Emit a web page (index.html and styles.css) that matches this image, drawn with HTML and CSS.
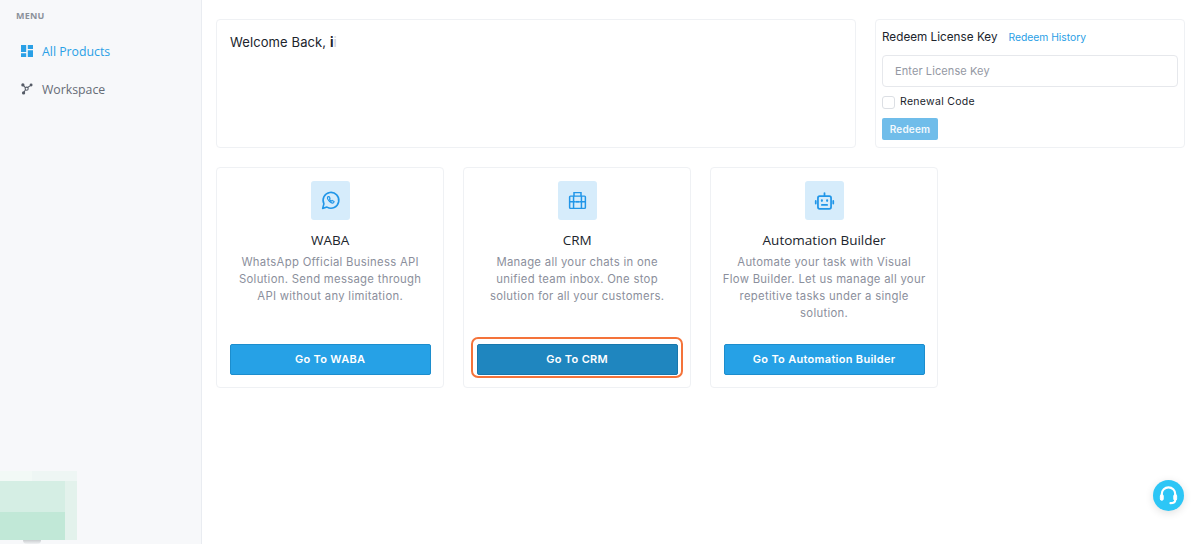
FILE: index.html
```html
<!DOCTYPE html>
<html lang="en">
<head>
<meta charset="utf-8">
<title>All Products</title>
<link rel="stylesheet" href="styles.css">
</head>
<body>
<div class="app">
  <aside class="sidebar">
    <div class="menu-label">MENU</div>
    <nav class="nav">
      <a class="nav-item active">
        <svg class="nav-icon" viewBox="0 0 12 12"><path fill="#2aa0e6" d="M0 0h5.200v7H0zM6.800 0H12v4H6.800zM6.800 5.200H12V12H6.800zM0 8.200h5.200V12H0z"/></svg>
        <span>All Products</span>
      </a>
      <a class="nav-item">
        <svg class="nav-icon" viewBox="0 0 14 14" fill="none"><path stroke="#555b66" stroke-width="1.200" d="M2.200 2.200 6 6.400 11.800 2.400M6 6.400 3 11.600"/><circle cx="2.200" cy="2.200" r="1.900" fill="#555b66"/><circle cx="11.800" cy="2.400" r="1.700" fill="#555b66"/><circle cx="3" cy="11.600" r="1.900" fill="#555b66"/><circle cx="6.600" cy="6.600" r="1.800" fill="#f7f8fa" stroke="#555b66" stroke-width="1.200"/></svg>
        <span>Workspace</span>
      </a>
    </nav>
  </aside>
  <main class="main">
    <section class="top-row">
      <div class="panel welcome">Welcome Back, <b>i</b><span class="fade">i</span></div>
      <div class="panel redeem">
        <div class="redeem-head"><span class="redeem-title">Redeem License Key</span><a class="redeem-link">Redeem History</a></div>
        <input class="license" type="text" placeholder="Enter License Key">
        <label class="renewal"><span class="check"></span>Renewal Code</label>
        <button class="redeem-btn" type="button">Redeem</button>
      </div>
    </section>
    <section class="cards">
      <article class="panel card">
        <div class="card-icon"><svg viewBox="0 0 24 24" fill="none" stroke="#2196e8" stroke-width="1.800" stroke-linecap="round" stroke-linejoin="round"><path d="M3 21 4.500 15.800A9 9 0 1 1 8 19.500Z"/><path d="M9 8c-1 1.100.1 3.300 1.700 4.900 1.700 1.600 3.700 2.600 4.900 1.500l.5-1.300-2.200-1.200-.9.800c-1-.4-1.900-1.400-2.300-2.300l.8-.9-1.100-2.100-1.400.1Z" stroke-width="1.300"/></svg></div>
        <h2 class="card-title">WABA</h2>
        <p class="card-text">WhatsApp Official Business API<br>Solution. Send message through<br>API without any limitation.</p>
        <a class="go-btn">Go To WABA</a>
      </article>
      <article class="panel card">
        <div class="card-icon"><svg viewBox="0 0 24 24" fill="none" stroke="#2196e8" stroke-width="1.700"><rect x="3" y="7" width="18" height="14" rx="1"/><path d="M8 7V3h8v4M3 13.500h7M14 13.500h7M7.500 7v14M16.500 7v14"/><rect x="10" y="12.500" width="4" height="2" fill="#2196e8" stroke="none"/></svg></div>
        <h2 class="card-title">CRM</h2>
        <p class="card-text">Manage all your chats in one<br>unified team inbox. One stop<br>solution for all your customers.</p>
        <a class="go-btn pressed">Go To CRM</a>
      </article>
      <article class="panel card">
        <div class="card-icon"><svg viewBox="0 0 24 24" fill="none" stroke="#2196e8" stroke-width="2" stroke-linecap="round"><rect x="4.500" y="7" width="15" height="14.500" rx="2"/><path d="M12 7V3.500M2 12.500v3M22 12.500v3M9 17h6"/><path d="M9 11.800v.6M15 11.800v.6" stroke-width="2.400"/></svg></div>
        <h2 class="card-title">Automation Builder</h2>
        <p class="card-text">Automate your task with Visual<br>Flow Builder. Let us manage all your<br>repetitive tasks under a single<br>solution.</p>
        <a class="go-btn">Go To Automation Builder</a>
      </article>
    </section>
  </main>
</div>
<div class="blob" aria-hidden="true"><i class="b1"></i><i class="b2"></i><i class="b3"></i><i class="b4"></i><i class="b5"></i><i class="b6"></i></div>
<button class="help" type="button" aria-label="Help"><svg viewBox="0 0 24 24" fill="none" stroke="#fff" stroke-width="2.200" stroke-linecap="round"><path d="M5 14V10.500a7 7 0 0 1 14 0V14"/><rect x="3.500" y="11" width="3" height="6" rx="1.400" fill="#fff" stroke-width="1"/><rect x="17.500" y="11" width="3" height="6" rx="1.400" fill="#fff" stroke-width="1"/><path d="M19 17c0 2-1.500 3-5 3"/></svg></button>
</body>
</html>
```
FILE: styles.css
```css
* { box-sizing: border-box; }
html, body { margin: 0; height: 100%; overflow: hidden; background: #fff; }
body { font-family: "Inter", "Liberation Sans", sans-serif; color: #1c2230; }
.app { display: flex; height: 544px; }
.sidebar { width: 202px; flex: none; background: #f7f8fa; border-right: 1px solid #e9ecf1; padding-top: 10px; font-family: "Open Sans", sans-serif; }
.menu-label { font-size: 9px; font-weight: 700; line-height: 12px; color: #8b919b; padding-left: 16px; letter-spacing: .2px; }
.nav { display: flex; flex-direction: column; margin-top: 10px; }
.nav-item { display: flex; align-items: center; height: 38px; padding-left: 21px; font-size: 12.300px; color: #666c76; gap: 9px; }
.nav-item.active { color: #2aa0e6; }
.nav-icon { width: 12px; height: 12px; flex: none; }
.main { flex: 1; padding: 19px 15px 0 14px; }
.panel { background: #fff; border: 1px solid #eff1f4; border-radius: 4px; }
.top-row { display: flex; gap: 19px; height: 129px; }
.welcome { width: 640px; padding: 13px; font-size: 13px; line-height: 18px; letter-spacing: .1px; color: #20242c; }
.welcome b { font-weight: 700; }
.fade { color: #c9ccd1; }
.redeem { width: 310px; padding: 9px 6px 0 6px; }
.redeem-head { display: flex; align-items: baseline; gap: 11px; line-height: 16px; }
.redeem-title { font-size: 11.700px; letter-spacing: .02px; color: #20242c; }
.redeem-link { font-size: 10.300px; color: #2aa0e6; }
.license { display: block; width: 100%; height: 32px; margin-top: 10px; border: 1px solid #e6e8ec; border-radius: 4px; padding: 0 12px; font: 11px "Inter", sans-serif; letter-spacing: .1px; background: #fff; }
.license::placeholder { color: #9498a3; opacity: 1; }
.renewal { display: flex; align-items: center; gap: 5px; margin-top: 8px; font-size: 10.500px; line-height: 14px; letter-spacing: .3px; color: #20242c; }
.check { width: 13px; height: 13px; border: 1px solid #dcdfe4; border-radius: 3px; background: #fff; }
.redeem-btn { display: block; margin-top: 9px; width: 56px; height: 22px; padding: 0; border: 0; border-radius: 2px; background: #70bdea; color: #f2f9fd; font: 600 10px "Inter", sans-serif; letter-spacing: .2px; }
.cards { display: flex; align-items: flex-start; gap: 18.700px; margin-top: 19px; }
.card { width: 228.300px; height: 221px; padding: 13px 12px 12px; display: flex; flex-direction: column; align-items: center; }
.card-icon { width: 39px; height: 39px; border-radius: 3px; background: #d6ecfb; display: flex; align-items: center; justify-content: center; }
.card-icon svg { width: 21px; height: 21px; }
.card-title { margin: 12px 0 0; font: 400 13.500px/17px "Open Sans", sans-serif; color: #20242c; }
.card-text { margin: 5px -4px 0; font-size: 11.300px; line-height: 17px; letter-spacing: .3px; text-align: center; white-space: nowrap; color: #8b8f9c; flex: 1; }
.go-btn { position: relative; display: flex; align-items: center; justify-content: center; width: 201px; height: 31px; flex: none; padding-bottom: 2px; border-radius: 2px; background: #26a1e6; border: 1px solid #1c8dcd; color: #fff; font-size: 11px; font-weight: 600; letter-spacing: .3px; }
.go-btn.pressed { background: #1f86bf; border-color: #1877ac; }
.go-btn.pressed::after { content: ""; position: absolute; left: -7px; right: -6px; top: -8px; bottom: -4px; border: 2px solid #f4733a; border-radius: 7px; }
.blob { position: absolute; left: 0; bottom: 0; width: 77px; height: 73px; }
.blob i { position: absolute; display: block; }
.b1 { left: 0; top: 0; width: 77px; height: 69px; background: #eef6f4; }
.b2 { left: 0; top: 10px; width: 65px; height: 31px; background: #d5eee4; }
.b3 { left: 0; top: 41px; width: 65px; height: 28px; background: #c1e8d7; }
.b4 { left: 65px; top: 10px; width: 12px; height: 59px; background: #e3f2ec; }
.b5 { left: 0; top: 0; width: 32px; height: 10px; background: #f2f9f6; }
.b6 { left: 23px; top: 69px; width: 18px; height: 4px; border-radius: 0 0 9px 9px; background: linear-gradient(#c9cccf, #f1f3f5); }
.help { position: absolute; left: 1153px; top: 480px; width: 31px; height: 31px; padding: 4px; border: 0; border-radius: 50%; background: #2dc6f6; box-shadow: 0 2px 8px rgba(0,0,0,.12); }
.help svg { display: block; width: 23px; height: 23px; }
```
